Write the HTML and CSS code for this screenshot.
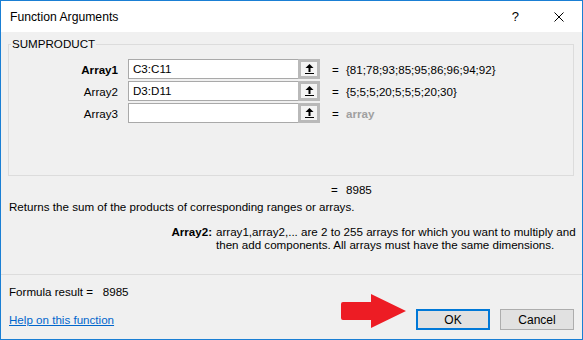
FILE: index.html
```html
<!DOCTYPE html>
<html lang="en">
<head>
  <meta charset="UTF-8" />
  <title>Function Arguments</title>
  <link rel="stylesheet" href="styles.css">
</head>
<body>
  <div class="dialog">
    <header class="titlebar">
      <span class="title">Function Arguments</span>
      <span class="help">?</span>
      <svg class="close" width="10" height="10" viewBox="0 0 10 10">
        <path d="M0.5 0.5 L9.5 9.5 M9.5 0.5 L0.5 9.5" stroke="#000" stroke-width="1"/>
      </svg>
    </header>

    <main class="content">
      <fieldset class="group">
        <legend>SUMPRODUCT</legend>
        <div class="args">
          <label class="arg-name bold">Array1</label>
          <div class="ref">
            <span class="ref-text">C3:C11</span>
            <span class="collapse">
              <svg width="9" height="10" viewBox="0 0 9 10"><path d="M4.5 0 L8.5 4 L5.5 4 L5.5 8 L3.5 8 L3.5 4 L0.5 4 Z" fill="#000"/><rect x="0" y="9" width="9" height="1" fill="#000"/></svg>
            </span>
          </div>
          <span class="eq">=</span>
          <span class="val">{81;78;93;85;95;86;96;94;92}</span>

          <label class="arg-name">Array2</label>
          <div class="ref">
            <span class="ref-text">D3:D11</span>
            <span class="collapse">
              <svg width="9" height="10" viewBox="0 0 9 10"><path d="M4.5 0 L8.5 4 L5.5 4 L5.5 8 L3.5 8 L3.5 4 L0.5 4 Z" fill="#000"/><rect x="0" y="9" width="9" height="1" fill="#000"/></svg>
            </span>
          </div>
          <span class="eq">=</span>
          <span class="val">{5;5;5;20;5;5;5;20;30}</span>

          <label class="arg-name">Array3</label>
          <div class="ref">
            <span class="ref-text"></span>
            <span class="collapse">
              <svg width="9" height="10" viewBox="0 0 9 10"><path d="M4.5 0 L8.5 4 L5.5 4 L5.5 8 L3.5 8 L3.5 4 L0.5 4 Z" fill="#000"/><rect x="0" y="9" width="9" height="1" fill="#000"/></svg>
            </span>
          </div>
          <span class="eq">=</span>
          <span class="val muted">array</span>
        </div>
      </fieldset>

      <div class="total">
        <span class="eq">=</span>
        <span class="val">8985</span>
      </div>

      <p class="desc">Returns the sum of the products of corresponding ranges or arrays.</p>

      <div class="argdesc">
        <span class="bold">Array2:</span>
        <span class="argtext">array1,array2,... are 2 to 255 arrays for which you want to multiply and<br>then add components. All arrays must have the same dimensions.</span>
      </div>
    </main>

    <footer class="footer">
      <div class="formula">Formula result =&nbsp;&nbsp;&nbsp;8985</div>
      <div class="actions">
        <a class="helplink" href="#">Help on this function</a>
        <svg class="pointer" width="66" height="34" viewBox="0 0 66 34">
          <path d="M2 8 H30 V0 L65 17 L30 34 V26 H2 Q0 26 0 24 V10 Q0 8 2 8 Z" fill="#ed1c24"/>
        </svg>
        <button class="btn primary">OK</button>
        <button class="btn">Cancel</button>
      </div>
    </footer>
  </div>
</body>
</html>
```

FILE: styles.css
```css
body {
  margin: 0;
  font-family: "Liberation Sans", Arial, sans-serif;
  font-size: 11.6px;
  color: #000;
}
.dialog {
  width: 583px;
  height: 340px;
  box-sizing: border-box;
  border: 1px solid #1a7fd4;
  background: #f0f0f0;
  display: flex;
  flex-direction: column;
}
.titlebar {
  height: 31px;
  background: #fff;
  display: flex;
  align-items: center;
  padding: 0 0 0 9px;
}
.title {
  flex: 1;
  font-size: 12.2px;
}
.help {
  font-size: 13px;
  margin-right: 35px;
}
.close {
  margin-right: 18px;
}
.content {
  padding: 0 8px 0 7px;
}
.group {
  margin: 5px 0 0;
  padding: 0;
  height: 137px;
  border: 1px solid #dcdcdc;
  min-width: 0;
}
.group legend {
  padding: 0 1px;
  margin-left: 2px;
  line-height: 14px;
}
.args {
  display: grid;
  grid-template-columns: 119px 192px 26px auto;
  row-gap: 2px;
  margin-top: 8px;
  align-items: center;
}
.arg-name {
  text-align: right;
  padding-right: 10px;
}
.ref {
  height: 20px;
  display: flex;
  box-sizing: border-box;
}
.ref-text {
  flex: 1;
  background: #fff;
  border: 1px solid #a9a9a9;
  border-right: none;
  padding: 0 4px;
  line-height: 18px;
}
.collapse {
  width: 22px;
  box-sizing: border-box;
  border: 3px solid #b9b9b9;
  background: #f4f4f4;
  display: flex;
  align-items: center;
  justify-content: center;
}
.eq {
  padding-left: 12px;
}
.val {
  white-space: nowrap;
}
.muted {
  color: #a0a0a0;
  font-weight: bold;
}
.bold {
  font-weight: bold;
}
.total {
  display: flex;
  margin: 7px 0 0 323px;
  line-height: 14px;
}
.total .eq {
  width: 15px;
  padding: 0;
}
.desc {
  margin: 3px 0 0 1px;
  line-height: 14px;
}
.argdesc {
  display: grid;
  grid-template-columns: 204px 1fr;
  column-gap: 4px;
  margin-top: 11px;
  line-height: 13px;
}
.argdesc .bold {
  text-align: right;
}
.argtext {
  white-space: nowrap;
}
.footer {
  margin-top: auto;
  border-top: 1px solid #dcdcdc;
  padding: 10px 8px 9px 8px;
  position: relative;
}
.formula {
  line-height: 14px;
}
.actions {
  display: flex;
  align-items: center;
  margin-top: 10px;
  position: relative;
}
.helplink {
  color: #0066cc;
  text-decoration: underline;
  flex: 1;
}
.pointer {
  position: absolute;
  left: 332px;
  top: -15px;
}
.btn {
  width: 74px;
  height: 21px;
  margin-left: 10px;
  font-family: inherit;
  font-size: 12px;
  background: #e1e1e1;
  border: 1px solid #adadad;
  padding: 0;
}
.btn.primary {
  border: 2px solid #0078d7;
  margin-left: 0;
}
```
